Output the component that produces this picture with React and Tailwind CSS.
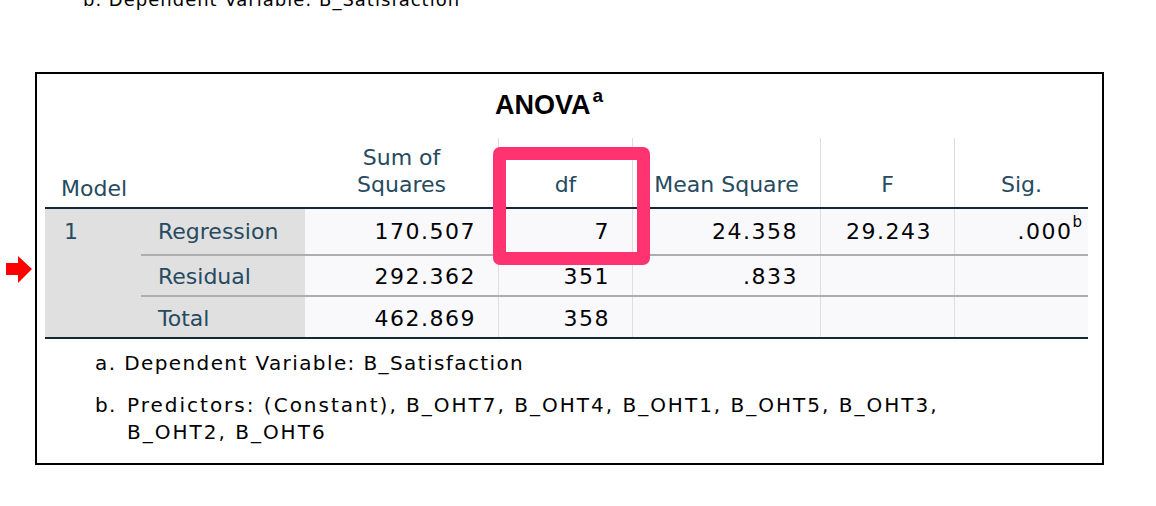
import React from 'react';

const sans = "font-['DejaVu_Sans',sans-serif]";

const rows = [
  { label: 'Regression', ss: '170.507', df: '7', ms: '24.358', f: '29.243', sig: '.000', h: 'h-[47px] border-b-2 border-[#aeaeae]', pt: '' },
  { label: 'Residual', ss: '292.362', df: '351', ms: '.833', f: '', sig: '', h: 'h-[41px] border-b-2 border-[#aeaeae]', pt: 'pt-[2px]' },
  { label: 'Total', ss: '462.869', df: '358', ms: '', f: '', sig: '', h: 'h-[40px]', pt: 'pt-[3px]' },
];

function Num({ children }) {
  return (
    <div className="flex items-center justify-end pr-[22px] text-[#010205] tracking-[1.5px]">
      {children}
    </div>
  );
}

export default function App() {
  return (
    <div className={`relative w-[1156px] h-[506px] overflow-hidden bg-white ${sans}`}>
      {/* tail of the previous footnote, cut by the top edge */}
      <div className="-mt-[11px] h-[22px] pl-[83px] text-[18px] leading-[22px] tracking-[1px] text-black">
        b. Dependent Variable: B_Satisfaction
      </div>

      <div className="mt-[61px] ml-[35px] w-[1069px] h-[393px] border-2 border-black">
        <div className="h-[64px] pt-[15px] pl-[458px] font-['Liberation_Sans',Arial,sans-serif] font-bold text-[27px] leading-[32px] text-black">
          ANOVA<sup className="text-[19px] relative -top-[12px] ml-[2px]">a</sup>
        </div>

        <div className="ml-[8px] w-[1043px] text-[22px]">
          {/* header */}
          <div className="grid grid-cols-[96px_164px_193px_134px_188px_134px_134px] h-[71px] border-b-2 border-[#152935] text-[#264a60] leading-[26px]">
            <div className="flex items-end pl-[16px] pb-[5px]">Model</div>
            <div />
            <div className="flex items-end justify-center pb-[9px] text-center leading-[27px]">
              Sum of<br />Squares
            </div>
            <div className="flex items-end justify-center pb-[9px] border-l border-[#dedede]">df</div>
            <div className="flex items-end justify-center pb-[9px] border-l border-[#dedede]">Mean Square</div>
            <div className="flex items-end justify-center pb-[9px] border-l border-[#dedede]">F</div>
            <div className="flex items-end justify-center pb-[9px] border-l border-[#dedede]">Sig.</div>
          </div>

          {/* body */}
          <div className="flex border-b-2 border-[#152935] leading-[26px]">
            <div className="w-[96px] bg-[#e0e0e0] text-[#264a60]">
              <div className="h-[45px] flex items-center pl-[19px]">1</div>
            </div>
            <div className="flex-1">
              {rows.map((r) => (
                <div key={r.label} className={`grid grid-cols-[164px_193px_134px_188px_134px_134px] ${r.h}`}>
                  <div className={`flex items-center pl-[17px] bg-[#e0e0e0] text-[#264a60] ${r.pt}`}>{r.label}</div>
                  <div className={`bg-[#f9f9fb] grid ${r.pt}`}><Num>{r.ss}</Num></div>
                  <div className={`bg-[#f9f9fb] grid border-l border-[#dedede] ${r.pt}`}><Num>{r.df}</Num></div>
                  <div className={`bg-[#f9f9fb] grid border-l border-[#dedede] ${r.pt}`}><Num>{r.ms}</Num></div>
                  <div className={`bg-[#f9f9fb] grid border-l border-[#dedede] ${r.pt}`}><Num>{r.f}</Num></div>
                  <div className={`bg-[#f9f9fb] grid border-l border-[#dedede] ${r.pt}`}>
                    {r.sig ? (
                      <div className="flex items-center justify-end pr-[6px] text-[#010205]">
                        <span className="tracking-[1.5px]">{r.sig}</span>
                        <sup className="text-[15px] relative -top-[10px]">b</sup>
                      </div>
                    ) : null}
                  </div>
                </div>
              ))}
            </div>
          </div>
        </div>

        {/* footnotes */}
        <div className="pl-[58px] text-[20px] text-black">
          <div className="mt-[12px] leading-[24px] tracking-[1.4px]">a. Dependent Variable: B_Satisfaction</div>
          <div className="mt-[17px] flex leading-[27px] tracking-[2px]">
            <span className="w-[32px] shrink-0 tracking-[1.4px]">b.</span>
            <span>
              Predictors: (Constant), B_OHT7, B_OHT4, B_OHT1, B_OHT5, B_OHT3,
              <br />
              B_OHT2, B_OHT6
            </span>
          </div>
        </div>
      </div>

      {/* highlight around the df cell */}
      <div className="absolute left-[493px] top-[147px] w-[157px] h-[118px] border-[13px] border-[#ff3370] rounded-[7px]" />

      {/* red row marker */}
      <svg className="absolute left-[5px] top-[255px]" width="28" height="29" viewBox="0 0 28 29">
        <polygon points="1,8 13,8 13,1 27,14 13,28 13,20 1,20" fill="#ff0000" />
      </svg>
    </div>
  );
}
